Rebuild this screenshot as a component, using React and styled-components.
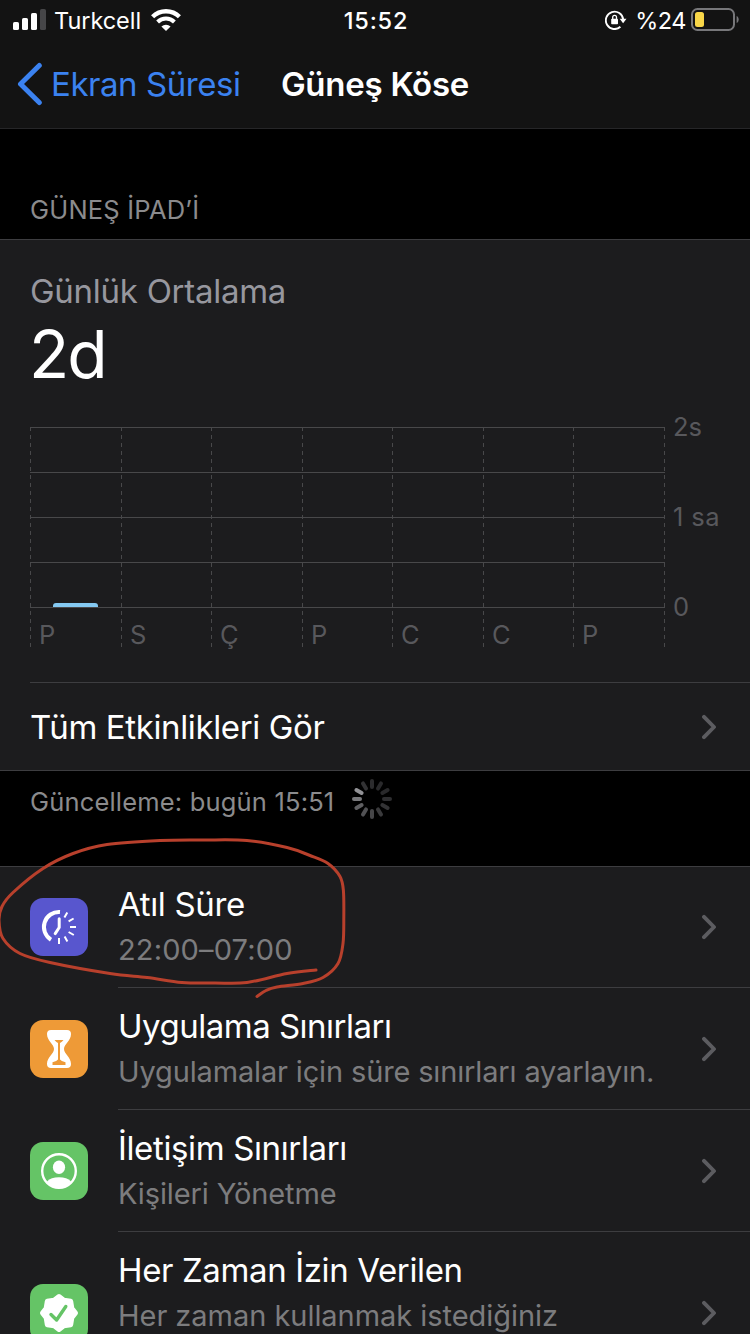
import React from 'react';
import styled, { createGlobalStyle } from 'styled-components';

const GlobalStyle = createGlobalStyle`
  * {
    box-sizing: border-box;
  }
  body {
    margin: 0;
    background: #000;
    color: #fff;
    font-family: Inter, "Liberation Sans", sans-serif;
  }
`;

const Screen = styled.div`
  position: relative;
  width: 750px;
  height: 1334px;
  overflow: hidden;
  background: #000;
`;

const Text = styled.span`
  display: block;
  white-space: nowrap;
  font-size: ${p => p.$size || 33}px;
  line-height: ${p => p.$line || 40}px;
  font-weight: ${p => p.$weight || 400};
  letter-spacing: ${p => p.$track || 0}px;
  color: ${p => p.$color || '#fff'};
`;

const TopBar = styled.header`
  height: 129px;
  background: #131313;
  border-bottom: 1px solid #262628;
`;

const StatusBar = styled.div`
  display: grid;
  grid-template-columns: 1fr auto 1fr;
  align-items: center;
  height: 40px;
  padding: 0 11px 0 13px;
`;

const StatusGroup = styled.div`
  display: flex;
  align-items: center;
  justify-content: ${p => (p.$end ? 'flex-end' : 'flex-start')};
  height: 40px;
`;

const StatusText = styled(Text)`
  height: 40px;
  padding-top: 1px;
  line-height: 39px;
`;

const Carrier = styled(StatusText)`
  margin: 0 10px 0 8px;
`;

const Percent = styled(StatusText)`
  margin: 0 5px 0 8px;
`;

const NavBar = styled.nav`
  display: grid;
  grid-template-columns: 1fr auto 1fr;
  align-items: center;
  height: 88px;
  padding: 0 17px;
`;

const BackLink = styled.a`
  display: flex;
  align-items: center;
  gap: 8px;
`;

const SectionHeader = styled.div`
  display: flex;
  align-items: flex-end;
  height: 110px;
  padding: 0 30px 14px;
`;

const Card = styled.section`
  background: #1c1c1e;
  border-top: 1px solid #3d3d40;
  border-bottom: 1px solid #3d3d40;
`;

const Summary = styled.div`
  padding: 31px 0 22px 30px;
`;

const BigNumber = styled(Text)`
  margin: 3px 0 0 -1px;
`;

const ChartSvg = styled.svg`
  display: block;
  margin: 16px 0 0 -30px;
  font-family: Inter, "Liberation Sans", sans-serif;
`;

const LinkRow = styled.div`
  display: flex;
  align-items: center;
  justify-content: space-between;
  height: 88px;
  margin-left: 30px;
  padding-right: 33px;
  border-top: 1px solid #3d3d40;
`;

const Footnote = styled.div`
  display: flex;
  align-items: flex-start;
  height: 95px;
  padding: 16px 30px 0;
`;

const SpinnerSvg = styled.svg`
  margin: -9px 0 0 17px;
`;

const Row = styled.div`
  display: flex;
  align-items: center;
  height: ${p => p.$height}px;
  padding-left: 30px;

  /* keeps the tile on whole pixels in the odd-height row */
  > svg {
    margin-bottom: ${p => p.$height % 2}px;
  }
`;

const RowBody = styled.div`
  display: flex;
  flex: 1;
  align-items: center;
  justify-content: space-between;
  height: 100%;
  margin-left: 30px;
  padding-right: 33px;
  border-bottom: 1px solid #3d3d40;
`;

const RowText = styled.div`
  align-self: flex-start;
  padding-top: ${p => p.$top}px;
`;

const Subtitle = styled(Text)`
  margin-top: 7px;
`;

const Tile = styled.svg`
  display: block;
  border-radius: 13px;
  background: ${p => p.$color};
`;

const Marker = styled.svg`
  position: absolute;
  left: 0;
  top: 820px;
  pointer-events: none;
`;

const Signal = () => (
  <svg width="33" height="22" viewBox="0 0 33 22" fill="#fff">
    <rect x="0" y="13" width="6" height="8" rx="1.6" />
    <rect x="9" y="9" width="6" height="12" rx="1.6" />
    <rect x="18" y="4" width="6" height="17" rx="1.6" />
    <rect x="27" y="0" width="6" height="21" rx="1.6" fill="#464648" />
  </svg>
);

const Wifi = () => (
  <svg width="30" height="22" viewBox="0 0 30 22" fill="none" stroke="#fff">
    <path d="M1.6 7.8A19 19 0 0 1 28.4 7.8" strokeWidth="4.4" />
    <path d="M6.6 13A12 12 0 0 1 23.4 13" strokeWidth="4" />
    <path d="M15 22L10.4 17.4A7 7 0 0 1 19.6 17.4Z" fill="#fff" stroke="none" />
  </svg>
);

const RotationLock = () => (
  <svg width="22" height="20" viewBox="0 0 22 20">
    <path d="M15.4 16.8A8.7 8.7 0 1 1 18.2 9.4" fill="none" stroke="#fff" strokeWidth="1.9" />
    <path d="M14.7 8.8H21.5L18.1 13.2Z" fill="#fff" />
    <rect x="6.2" y="8.8" width="6.8" height="5.4" rx="0.8" fill="#fff" />
    <path d="M7.7 9V7.2A1.9 1.9 0 0 1 11.5 7.2V9" fill="none" stroke="#fff" strokeWidth="1.3" />
  </svg>
);

const Battery = () => (
  <svg width="48" height="24" viewBox="0 0 48 24">
    <rect x="1" y="1" width="42" height="21" rx="5.5" fill="none" stroke="#77777a" strokeWidth="2" />
    <rect x="4" y="4" width="9" height="15" rx="2.5" fill="#f8d648" />
    <path d="M45.6 8C48.4 9 48.4 14 45.6 15Z" fill="#77777a" />
  </svg>
);

const Chevron = () => (
  <svg width="15" height="26" viewBox="0 0 15 26">
    <path d="M2 2.8L12 13L2 23.2" fill="none" stroke="#5c5c60" strokeWidth="3.9" strokeLinecap="round" strokeLinejoin="round" />
  </svg>
);

const columns = [30, 121, 211, 302, 392, 483, 573, 664];
const days = ['P', 'S', 'Ç', 'P', 'C', 'C', 'P'];

const Chart = () => (
  <ChartSvg width="750" height="250" viewBox="0 0 750 250">
    {[17, 62, 107, 152, 197].map(y => (
      <path key={y} d={`M30 ${y + 0.5}H665`} stroke="#48484a" />
    ))}
    {columns.map(x => (
      <path key={x} d={`M${x + 0.5} 17V237`} stroke="#48484a" strokeDasharray="4 4" />
    ))}
    <path d="M53 197V196Q53 193 56 193H95Q98 193 98 196V197Z" fill="#84c9f2" />
    <g fill="#58585c" fontSize="25.5">
      {days.map((day, i) => (
        <text key={i} x={columns[i] + 9} y="234">{day}</text>
      ))}
      <text x="673" y="26">2s</text>
      <text x="673" y="116" letterSpacing="0.4">1 sa</text>
      <text x="673" y="206">0</text>
    </g>
  </ChartSvg>
);

// brightness of each spoke, clockwise from the top
const spokes = ['#2c2c2e', '#29292b', '#29292b', '#2e2e30', '#333335', '#3a3a3c', '#464648', '#515154', '#5f5f62', '#79797c', '#929296', '#323234'];

const Spinner = () => (
  <SpinnerSvg width="42" height="42" viewBox="-21 -21 42 42">
    {spokes.map((color, i) => (
      <path key={i} d="M0 -18V-12" stroke={color} strokeWidth="4" strokeLinecap="round" transform={`rotate(${i * 30})`} />
    ))}
  </SpinnerSvg>
);

const DowntimeIcon = () => (
  <Tile $color="#5856ce" width="58" height="58" viewBox="0 0 58 58" fill="none" stroke="#fff">
    <path d="M30 14A15 15 0 0 0 21 41.7" strokeWidth="4" />
    <path d="M29.2 20.8V29.5L25.2 35.6" strokeWidth="3" strokeLinecap="round" strokeLinejoin="round" />
    <path d="M37.3 14.4L34.4 19.5M43.6 20.5L38.6 23.4M46 29H40M43.8 37L38.6 34M37.4 43.4L34.6 38.4M29 46V40" strokeWidth="2" />
  </Tile>
);

const HourglassIcon = () => (
  <Tile $color="#ee9a37" width="58" height="58" viewBox="0 0 58 58">
    <path d="M21 10H37Q41 10 41 14C41 21 34 24 34 29C34 34 41 37 41 44Q41 48 37 48H21Q17 48 17 44C17 37 24 34 24 29C24 24 17 21 17 14Q17 10 21 10Z" fill="#fff" />
    <path d="M24.5 20H33.5Q32 22.2 30 23V39.5Q31 41 35.5 42.2V45H22.5V42.2Q27 41 28 39.5V23Q26 22.2 24.5 20Z" fill="#ee9a37" />
  </Tile>
);

const ContactIcon = () => (
  <Tile $color="#65c466" width="58" height="58" viewBox="0 0 58 58">
    <circle cx="29" cy="29" r="16.8" fill="none" stroke="#fff" strokeWidth="2.4" />
    <ellipse cx="29" cy="25.3" rx="6.1" ry="6.8" fill="#fff" />
    <path d="M17 39.5Q21 35.3 29 35.3T41 39.5Q36 46.5 29 46.5T17 39.5Z" fill="#fff" />
  </Tile>
);

const AllowedIcon = () => (
  <Tile $color="#65c466" width="58" height="58" viewBox="0 0 58 58">
    <path
      d="M29 12.5L33.8 16.2L40.7 17.3L41.8 24.2L45.5 29L41.8 33.8L40.7 40.7L33.8 41.8L29 45.5L24.2 41.8L17.3 40.7L16.2 33.8L12.5 29L16.2 24.2L17.3 17.3L24.2 16.2Z"
      fill="#fff"
      stroke="#fff"
      strokeWidth="5"
      strokeLinejoin="round"
    />
    <path d="M21 30.5L26.6 36L35.8 22.5" fill="none" stroke="#65c466" strokeWidth="3.4" strokeLinecap="round" strokeLinejoin="round" />
  </Tile>
);

const loop = [
  [257, 176], [266, 170], [277, 166.5], [303, 163], [323, 157], [338, 143], [343, 123], [343.8, 98], [343.4, 70],
  [340, 56], [328, 43], [310, 35], [287, 27], [247, 20], [203, 19.5], [160, 20], [107, 24], [73, 33], [43, 48],
  [13, 72], [2, 86], [-1, 100], [3, 118], [20, 133], [50, 142], [110, 153], [147, 157], [182, 162], [215, 162.5],
  [247, 162], [287, 153], [316, 149.5],
];

// smooth curve through all the points
const toPath = pts =>
  pts.slice(1).reduce((d, p, i) => {
    const a = pts[i - 1] || pts[i];
    const b = pts[i];
    const c = pts[i + 2] || p;
    return `${d}C${b[0] + (p[0] - a[0]) / 6} ${b[1] + (p[1] - a[1]) / 6} ${p[0] - (c[0] - b[0]) / 6} ${p[1] - (c[1] - b[1]) / 6} ${p[0]} ${p[1]}`;
  }, `M${pts[0][0]} ${pts[0][1]}`);

const rows = [
  { title: 'Atıl Süre', track: -0.35, sub: '22:00–07:00', subTrack: 0.15, icon: DowntimeIcon, height: 121, top: 17 },
  { title: 'Uygulama Sınırları', track: -0.5, sub: 'Uygulamalar için süre sınırları ayarlayın.', subTrack: -0.15, icon: HourglassIcon, height: 122, top: 18 },
  { title: 'İletişim Sınırları', track: -0.37, sub: 'Kişileri Yönetme', subTrack: -0.12, icon: ContactIcon, height: 122, top: 18 },
  { title: 'Her Zaman İzin Verilen', track: -0.37, sub: 'Her zaman kullanmak istediğiniz', subTrack: -0.04, icon: AllowedIcon, height: 162, top: 18 },
];

const App = () => (
  <Screen>
    <GlobalStyle />
    <TopBar>
      <StatusBar>
        <StatusGroup>
          <Signal />
          <Carrier $size={23.5} $track={-0.05}>Turkcell</Carrier>
          <Wifi />
        </StatusGroup>
        <StatusText $size={23.5} $weight={550} $track={0.8}>15:52</StatusText>
        <StatusGroup $end>
          <RotationLock />
          <Percent $size={23.5} $track={-0.5}>%24</Percent>
          <Battery />
        </StatusGroup>
      </StatusBar>
      <NavBar>
        <BackLink>
          <svg width="26" height="44" viewBox="0 0 26 44">
            <path d="M22.3 3.5L3.5 22L22.3 40.5" fill="none" stroke="#3b82f0" strokeWidth="5" strokeLinecap="round" strokeLinejoin="round" />
          </svg>
          <Text $color="#3b82f0" $track={-0.45}>Ekran Süresi</Text>
        </BackLink>
        <Text $weight={600} $track={-0.25}>Güneş Köse</Text>
        <span />
      </NavBar>
    </TopBar>

    <SectionHeader>
      <Text $size={25.5} $line={30} $track={0.2} $color="#8b8b8d">GÜNEŞ İPAD’İ</Text>
    </SectionHeader>

    <Card>
      <Summary>
        <Text $color="#97979e" $track={-0.27}>Günlük Ortalama</Text>
        <BigNumber $size={66} $line={80} $track={-2}>2d</BigNumber>
        <Chart />
      </Summary>
      <LinkRow>
        <Text $track={-0.37}>Tüm Etkinlikleri Gör</Text>
        <Chevron />
      </LinkRow>
    </Card>

    <Footnote>
      <Text $size={25.5} $line={30} $track={0.18} $color="#8b8b8d">Güncelleme: bugün 15:51</Text>
      <Spinner />
    </Footnote>

    <Card>
      {rows.map(({ title, track, sub, subTrack, icon: Icon, height, top }) => (
        <Row key={title} $height={height}>
          <Icon />
          <RowBody>
            <RowText $top={top}>
              <Text $track={track}>{title}</Text>
              <Subtitle $size={29} $line={38} $track={subTrack} $color="#7c7c7e">{sub}</Subtitle>
            </RowText>
            <Chevron />
          </RowBody>
        </Row>
      ))}
    </Card>

    <Marker width="360" height="190" viewBox="0 0 360 190">
      <path d={toPath(loop)} fill="none" stroke="#b8402c" strokeWidth="3" strokeLinecap="round" transform="translate(0 0.5)" />
    </Marker>
  </Screen>
);

export default App;
